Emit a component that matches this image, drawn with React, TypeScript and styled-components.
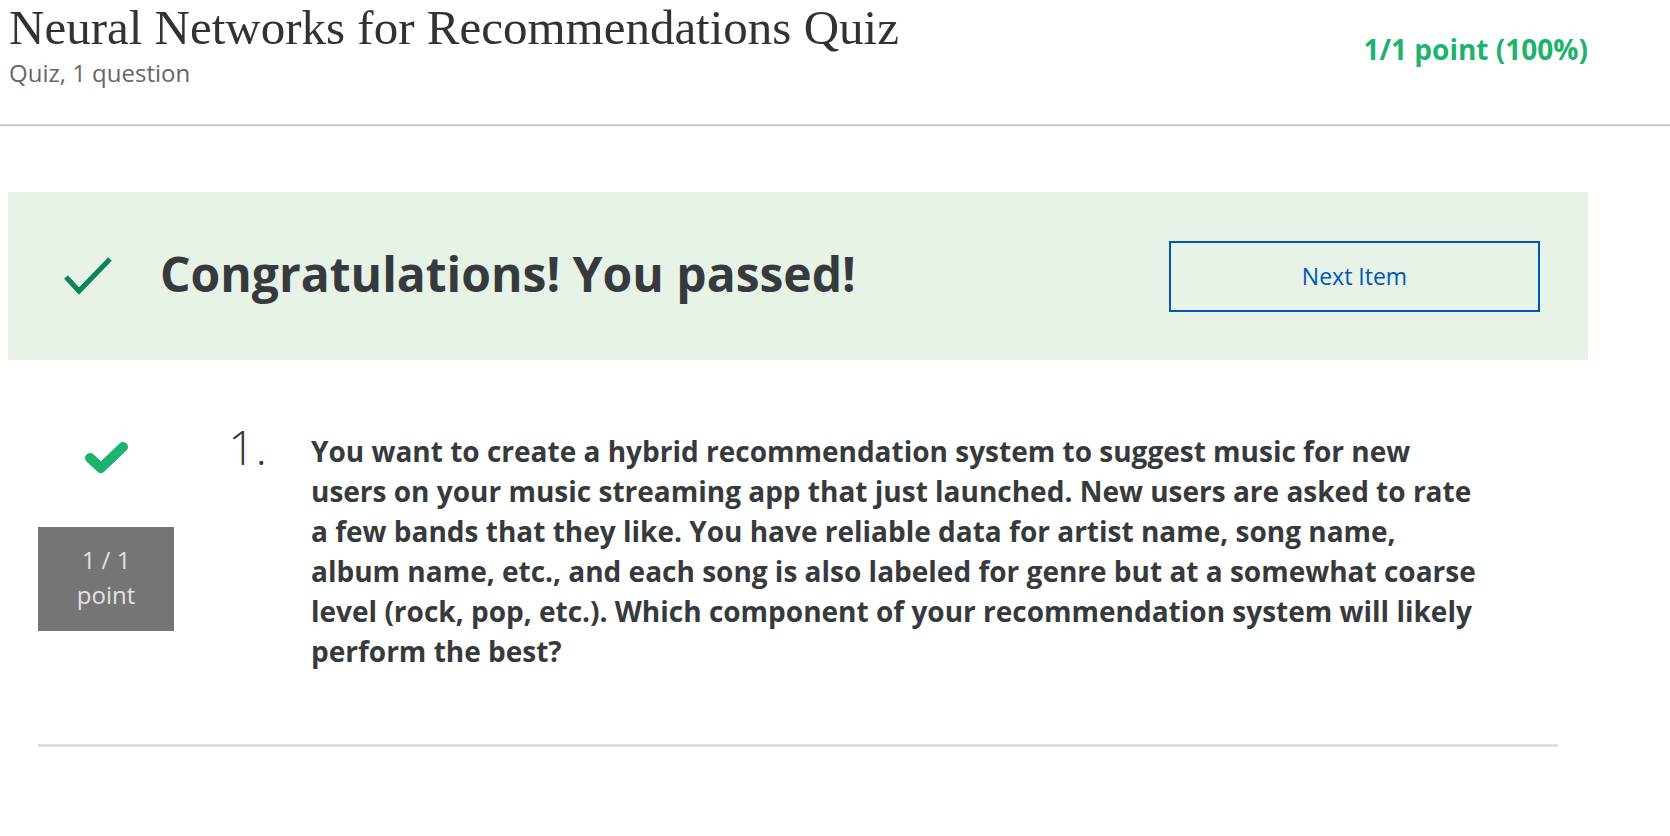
import React from "react";
import styled, { createGlobalStyle } from "styled-components";

const GlobalStyle = createGlobalStyle`
  html, body { margin: 0; padding: 0; background: #ffffff; }
  body { font-family: "Open Sans", "Liberation Sans", sans-serif; color: #373a3c; }
  * { box-sizing: border-box; }
`;

const Page = styled.div`
  width: 1670px;
  min-height: 836px;
  background: #ffffff;
`;

const Header = styled.header`
  display: flex;
  justify-content: space-between;
  align-items: flex-start;
  padding: 0 82px 37px 9px;
  border-bottom: 2px solid #cfcfcf;
  box-shadow: 0 1px 1px rgba(0, 0, 0, 0.06);
`;

const TitleBlock = styled.div`
  display: flex;
  flex-direction: column;
`;

const Title = styled.h1`
  margin: 0;
  font-family: "Liberation Serif", "DejaVu Serif", serif;
  font-weight: 400;
  font-size: 49px;
  line-height: 56px;
  color: #2f3236;
`;

const Subtitle = styled.div`
  margin-top: 3px;
  font-family: "Open Sans", sans-serif;
  font-size: 24px;
  line-height: 28px;
  color: #666666;
`;

const Score = styled.div`
  margin-top: 31px;
  font-family: "Open Sans", sans-serif;
  font-weight: 700;
  font-size: 28px;
  line-height: 36px;
  color: #1db36e;
`;

const Banner = styled.section`
  display: flex;
  align-items: center;
  height: 168px;
  margin: 66px 82px 0 8px;
  padding: 0 48px 0 56px;
  background: #e7f3e7;
`;

const BannerCheck = styled.svg`
  width: 48px;
  height: 38px;
  flex: none;
`;

const BannerTitle = styled.h2`
  flex: 1;
  margin: -4px 0 0 48px;
  font-family: "Open Sans", sans-serif;
  font-weight: 700;
  font-size: 48px;
  line-height: 60px;
  color: #373a3c;
`;

const NextButton = styled.button`
  width: 371px;
  height: 71px;
  border: 2px solid #0056b8;
  background: transparent;
  font-family: "Open Sans", sans-serif;
  font-size: 23px;
  color: #0056b8;
  cursor: pointer;
`;

const Question = styled.article`
  display: flex;
  align-items: flex-start;
  margin: 71px 112px 0 38px;
  padding-bottom: 73px;
  border-bottom: 3px solid #e0e0e0;
`;

const Aside = styled.div`
  width: 136px;
  flex: none;
  display: flex;
  flex-direction: column;
  align-items: center;
`;

const QuestionCheck = styled.svg`
  width: 45px;
  height: 34px;
  margin-top: 10px;
`;

const PointBox = styled.div`
  width: 136px;
  margin-top: 52px;
  padding: 15px 0 19px;
  background: #757575;
  color: #e2e2e2;
  font-family: "Open Sans", sans-serif;
  font-size: 24px;
  line-height: 35px;
  text-align: center;
`;

const Number = styled.div`
  width: 83px;
  flex: none;
  margin-left: 54px;
  font-family: "Open Sans", sans-serif;
  font-weight: 300;
  font-size: 48px;
  line-height: 32px;
  color: #373a3c;
`;

const Prompt = styled.p`
  width: 1175px;
  margin: 0;
  font-family: "Open Sans", sans-serif;
  font-weight: 700;
  font-size: 28px;
  line-height: 40px;
  color: #373a3c;
`;

export default function App() {
  return (
    <Page>
      <GlobalStyle />
      <Header>
        <TitleBlock>
          <Title>Neural Networks for Recommendations Quiz</Title>
          <Subtitle>Quiz, 1 question</Subtitle>
        </TitleBlock>
        <Score>1/1 point (100%)</Score>
      </Header>

      <Banner>
        <BannerCheck viewBox="0 0 48 38">
          <polyline
            points="2,20 15,34 46,2"
            fill="none"
            stroke="#0b8457"
            strokeWidth="5"
          />
        </BannerCheck>
        <BannerTitle>Congratulations! You passed!</BannerTitle>
        <NextButton>Next Item</NextButton>
      </Banner>

      <Question>
        <Aside>
          <QuestionCheck viewBox="0 0 45 34">
            <polyline
              points="6,17 17,27 39,6"
              fill="none"
              stroke="#1db36e"
              strokeWidth="10"
              strokeLinecap="round"
              strokeLinejoin="round"
            />
          </QuestionCheck>
          <PointBox>
            1 / 1
            <br />
            point
          </PointBox>
        </Aside>
        <Number>1.</Number>
        <Prompt>
          You want to create a hybrid recommendation system to suggest music for new users on your
          music streaming app that just launched. New users are asked to rate a few bands that they
          like. You have reliable data for artist name, song name, album name, etc., and each song is
          also labeled for genre but at a somewhat coarse level (rock, pop, etc.). Which component of
          your recommendation system will likely perform the best?
        </Prompt>
      </Question>
    </Page>
  );
}
